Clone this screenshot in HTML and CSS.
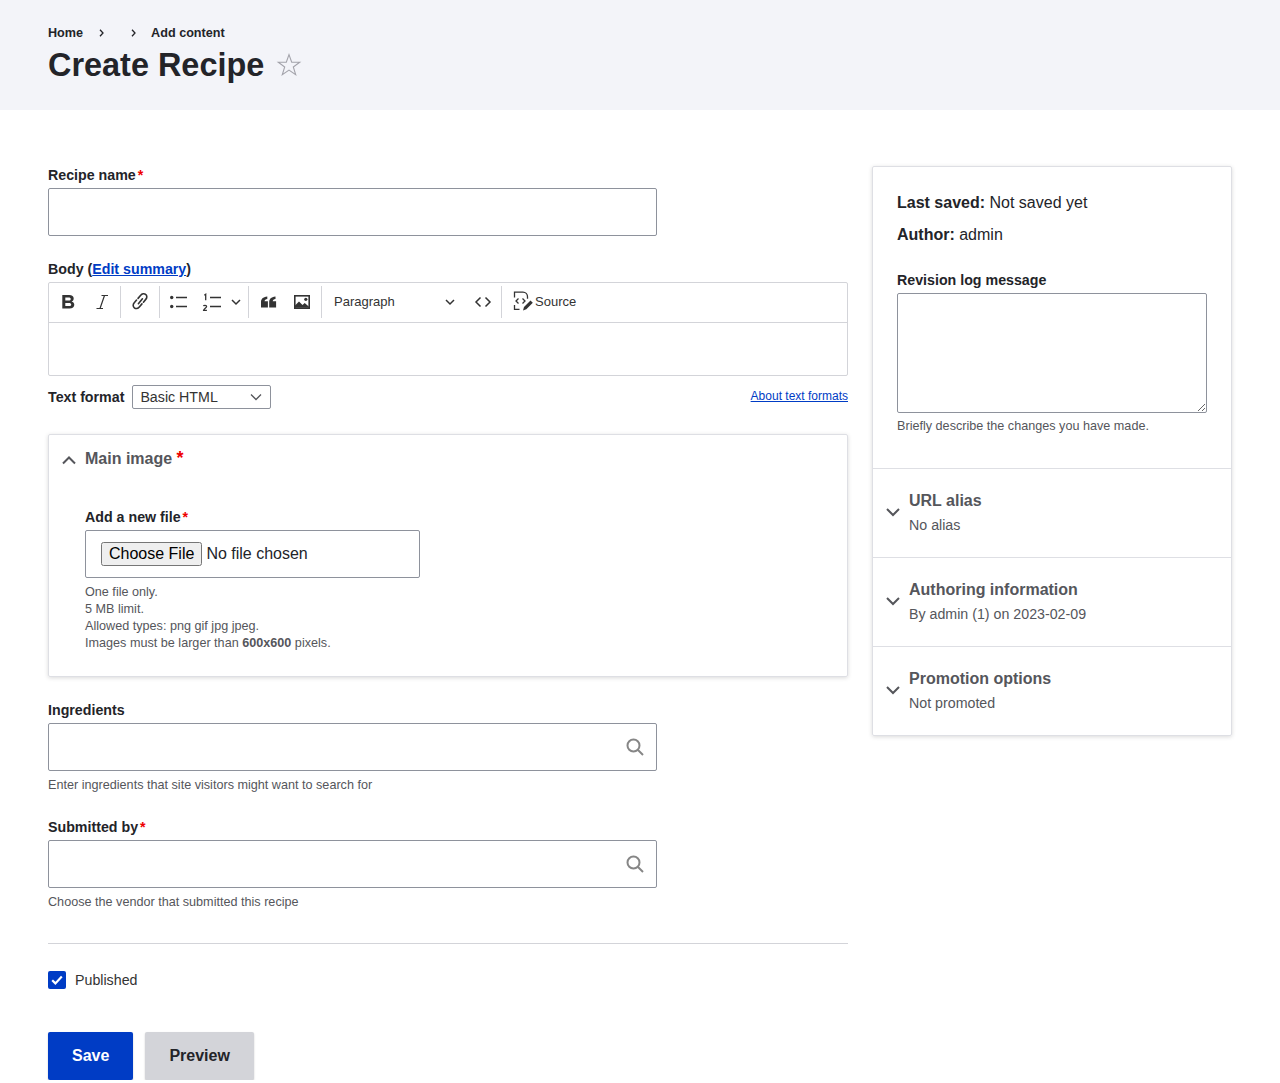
FILE: index.html
```html
<!DOCTYPE html>
<html lang="en">
<head>
  <meta charset="UTF-8">
  <meta name="viewport" content="width=device-width, initial-scale=1.0">
  <title>Create Recipe</title>
  <link rel="stylesheet" href="styles.css">
</head>
<body>
  <header class="page-head">
    <nav class="crumbs">
      <a href="#">Home</a>
      <svg class="crumb-sep" width="5" height="8" viewBox="0 0 5 8"><path d="M1 .8L4 4 1 7.200" fill="none" stroke="#232429" stroke-width="1.300"/></svg>
      <svg class="crumb-sep crumb-sep-2" width="5" height="8" viewBox="0 0 5 8"><path d="M1 .8L4 4 1 7.200" fill="none" stroke="#232429" stroke-width="1.300"/></svg>
      <a href="#">Add content</a>
    </nav>
    <div class="title-row">
      <h1>Create Recipe</h1>
      <svg class="star" width="26" height="26" viewBox="0 0 26 26"><path d="M13 2.600l2.700 7.600h8l-6.400 4.800 2.400 7.700-6.700-4.600-6.700 4.600 2.400-7.700-6.400-4.800h8z" fill="none" stroke="#a3a3ab" stroke-width="1.100"/></svg>
    </div>
  </header>

  <form class="layout">
    <div class="main-col">
      <div class="field recipe-name">
        <label class="lbl">Recipe name<span class="req">*</span></label>
        <input class="text-input" type="text">
      </div>

      <div class="field body-field">
        <label class="lbl">Body (<a href="#">Edit summary</a>)</label>
        <div class="editor">
          <div class="toolbar">
            <span class="tb-btn">
              <svg width="20" height="20" viewBox="0 0 20 20"><path fill-rule="evenodd" d="M4.300 3h6.900c2.900 0 4.500 1.300 4.500 3.500 0 1.500-.8 2.500-2.100 3 1.800.4 2.700 1.700 2.700 3.300 0 2.400-1.800 3.700-4.800 3.700H4.300zm3 2.400v3.100h3.400c1.300 0 2-.5 2-1.600 0-1-.7-1.500-2-1.500zm0 5.500v3.200h3.700c1.500 0 2.200-.5 2.200-1.600s-.7-1.600-2.200-1.600z" fill="#333"/></svg>
            </span>
            <span class="tb-btn">
              <svg width="20" height="20" viewBox="0 0 20 20"><path d="M9.500 3.500H16M4.500 16.500H11M12.500 3.500L8 16.500" fill="none" stroke="#333" stroke-width="1.200"/></svg>
            </span>
            <i class="tb-sep"></i>
            <span class="tb-btn tb-link">
              <svg width="20" height="20" viewBox="0 0 20 20"><g transform="translate(10 9) scale(1.150) translate(-10 -10)"><path d="M8.600 12.300l3.500-4.200M7 9.200l-2 2.400c-1.300 1.500-1.200 3.300.1 4.300 1.300 1.100 3.100.8 4.300-.7l2.300-2.700M13 11l2-2.400c1.300-1.500 1.200-3.300-.1-4.300-1.300-1.100-3.100-.8-4.300.7L8.300 7.700" fill="none" stroke="#333" stroke-width="1.400" stroke-linecap="round"/></g></svg>
            </span>
            <i class="tb-sep"></i>
            <span class="tb-btn">
              <svg width="20" height="20" viewBox="0 0 20 20"><circle cx="2.700" cy="5.500" r="1.700" fill="#333"/><circle cx="2.700" cy="14.500" r="1.700" fill="#333"/><path d="M7 5.500h11M7 14.500h11" stroke="#333" stroke-width="1.500"/></svg>
            </span>
            <span class="tb-btn tb-list">
              <svg width="20" height="20" viewBox="0 0 20 20"><path d="M8 5.500h11M8 14.500h11" stroke="#333" stroke-width="1.500"/><path d="M2.300 3.200l1.400-1v6" fill="none" stroke="#333" stroke-width="1.300"/><path d="M1.500 14.200c.2-1.100 3.100-1.300 3.100.3 0 1.200-2.900 2.300-3 3.800h3.300" fill="none" stroke="#333" stroke-width="1.300"/></svg>
            </span>
            <span class="tb-chev">
              <svg width="10" height="10" viewBox="0 0 10 10"><path d="M1 3l4 4 4-4" fill="none" stroke="#333" stroke-width="1.500"/></svg>
            </span>
            <i class="tb-sep"></i>
            <span class="tb-btn">
              <svg width="20" height="20" viewBox="0 0 20 20"><path d="M3 15.500V10.200C3 7.200 4.800 4.900 9.300 4.500v2.400c-1.700.3-2.700 1.100-2.800 2.400h3.400v6.200zM11.200 15.500V10.200c0-3 1.800-5.300 6.300-5.700v2.400c-1.700.3-2.700 1.100-2.800 2.400h3.400v6.200z" fill="#333"/></svg>
            </span>
            <span class="tb-btn tb-image">
              <svg width="20" height="20" viewBox="0 0 20 20"><rect x="2.800" y="3.800" width="14.400" height="12.400" fill="none" stroke="#333" stroke-width="1.600"/><path d="M3 15.800v-2.300l4-4 3.500 3.500 2.200-2 4.300 3.800v1z" fill="#333"/><circle cx="13.800" cy="7.300" r="1.600" fill="#333"/></svg>
            </span>
            <i class="tb-sep"></i>
            <span class="tb-select">
              <span class="tb-text">Paragraph</span>
              <svg width="10" height="10" viewBox="0 0 10 10"><path d="M1 3l4 4 4-4" fill="none" stroke="#333" stroke-width="1.500"/></svg>
            </span>
            <span class="tb-btn tb-code">
              <svg width="20" height="20" viewBox="0 0 20 20"><path d="M7.500 5.500L3 10l4.500 4.500M12.500 5.500L17 10l-4.500 4.500" fill="none" stroke="#333" stroke-width="1.500"/></svg>
            </span>
            <i class="tb-sep"></i>
            <span class="tb-source">
              <svg class="src-icon" width="20" height="20" viewBox="0 0 20 20"><path d="M1.500 6.500V1.200H10c2.500 0 4.500 2 4.500 4.500v2M1.500 14v4.300h5" fill="none" stroke="#333" stroke-width="1.300"/><path d="M5.500 7.500L3 10l2.500 2.500M9.500 7.500L12 10l-2.500 2.500" fill="none" stroke="#333" stroke-width="1.300"/><path d="M10 19.500l1-3.500 6.500-6.500 2.300 2.300-6.500 6.500z" fill="#333"/></svg>
              <span class="tb-text">Source</span>
            </span>
          </div>
          <div class="editor-area"></div>
        </div>
        <div class="format-row">
          <label class="lbl format-lbl">Text format</label>
          <span class="format-select">
            Basic HTML
            <svg width="12" height="12" viewBox="0 0 12 12"><path d="M1 3.500l5 5 5-5" fill="none" stroke="#55565b" stroke-width="1.300"/></svg>
          </span>
          <a class="format-help" href="#">About text formats</a>
        </div>
      </div>

      <section class="image-box">
        <div class="box-head">
          <svg width="16" height="16" viewBox="0 0 16 16"><path d="M2 11.500l6-6 6 6" fill="none" stroke="#55565b" stroke-width="2"/></svg>
          <span class="box-title">Main image <span class="req-big">*</span></span>
        </div>
        <div class="box-body">
          <label class="lbl">Add a new file<span class="req">*</span></label>
          <div class="file-wrap"><input type="file"></div>
          <div class="hint file-hint">
            One file only.<br>
            5 MB limit.<br>
            Allowed types: png gif jpg jpeg.<br>
            Images must be larger than <b>600x600</b> pixels.
          </div>
        </div>
      </section>

      <div class="field ingredients">
        <label class="lbl">Ingredients</label>
        <div class="search-input">
          <input class="text-input" type="text">
          <svg class="search-icon" width="18" height="18" viewBox="0 0 18 18"><circle cx="7.500" cy="7.500" r="6" fill="none" stroke="#868686" stroke-width="2"/><path d="M12 12l5 5" stroke="#868686" stroke-width="2"/></svg>
        </div>
        <div class="hint field-hint">Enter ingredients that site visitors might want to search for</div>
      </div>

      <div class="field submitted">
        <label class="lbl">Submitted by<span class="req">*</span></label>
        <div class="search-input">
          <input class="text-input" type="text">
          <svg class="search-icon" width="18" height="18" viewBox="0 0 18 18"><circle cx="7.500" cy="7.500" r="6" fill="none" stroke="#868686" stroke-width="2"/><path d="M12 12l5 5" stroke="#868686" stroke-width="2"/></svg>
        </div>
        <div class="hint field-hint">Choose the vendor that submitted this recipe</div>
      </div>

      <hr class="divider">

      <label class="check-row">
        <span class="checkbox">
          <svg width="14" height="14" viewBox="0 0 14 14"><path d="M2.200 7.200l3.200 3.200 6.400-6.800" fill="none" stroke="#fff" stroke-width="2.200"/></svg>
        </span>
        Published
      </label>

      <div class="actions">
        <button class="btn btn-primary" type="button">Save</button>
        <button class="btn btn-grey" type="button">Preview</button>
      </div>
    </div>

    <aside class="side-col">
      <div class="meta">
        <p class="meta-line"><b>Last saved:</b> Not saved yet</p>
        <p class="meta-line"><b>Author:</b> admin</p>
        <label class="lbl rev-lbl">Revision log message</label>
        <textarea class="rev-text"></textarea>
        <div class="hint">Briefly describe the changes you have made.</div>
      </div>
      <div class="acc-item">
        <svg width="16" height="16" viewBox="0 0 16 16"><path d="M2 5l6 6 6-6" fill="none" stroke="#55565b" stroke-width="2"/></svg>
        <div>
          <div class="acc-title">URL alias</div>
          <div class="acc-sub">No alias</div>
        </div>
      </div>
      <div class="acc-item">
        <svg width="16" height="16" viewBox="0 0 16 16"><path d="M2 5l6 6 6-6" fill="none" stroke="#55565b" stroke-width="2"/></svg>
        <div>
          <div class="acc-title">Authoring information</div>
          <div class="acc-sub">By admin (1) on 2023-02-09</div>
        </div>
      </div>
      <div class="acc-item">
        <svg width="16" height="16" viewBox="0 0 16 16"><path d="M2 5l6 6 6-6" fill="none" stroke="#55565b" stroke-width="2"/></svg>
        <div>
          <div class="acc-title">Promotion options</div>
          <div class="acc-sub">Not promoted</div>
        </div>
      </div>
    </aside>
  </form>
</body>
</html>
```

FILE: styles.css
```css
* {
  box-sizing: border-box;
}

body {
  margin: 0;
  font-family: "Liberation Sans", Arial, sans-serif;
  font-size: 16px;
  color: #232429;
  background-color: #fff;
}

a {
  color: #003cc5;
}

/* header */
.page-head {
  height: 110px;
  padding: 24px 48px 0;
  background-color: #f3f4f9;
}

.crumbs {
  display: flex;
  align-items: center;
  height: 17px;
  font-size: 12.64px;
  font-weight: bold;
}

.crumbs a {
  color: #232429;
  text-decoration: none;
}

.crumb-sep {
  margin-left: 16px;
}

.crumb-sep-2 {
  margin-left: 27px;
  margin-right: 15px;
}

.title-row {
  display: flex;
  align-items: center;
  margin-top: 4px;
}

h1 {
  margin: 0;
  font-size: 32.44px;
  line-height: 40px;
}

.star {
  margin-left: 12px;
}

/* columns */
.layout {
  display: grid;
  grid-template-columns: 800px 360px;
  gap: 24px;
  padding: 56px 48px 0;
  align-items: start;
}

.lbl {
  display: block;
  margin-bottom: 4px;
  font-size: 14.22px;
  line-height: 18px;
  font-weight: bold;
}

.req {
  margin-left: 2px;
  color: #e00;
}

.text-input {
  display: block;
  width: 609px;
  height: 48px;
  border: 1px solid #8e929c;
  border-radius: 2px;
  background: #fff;
}

.hint {
  margin-top: 5px;
  font-size: 12.64px;
  line-height: 17px;
  color: #55565b;
}

.field-hint {
  margin-top: 6px;
}

.body-field {
  margin-top: 24px;
}

/* editor */
.editor {
  border: 1px solid #d3d4d9;
  border-radius: 2px;
}

.toolbar {
  display: flex;
  align-items: center;
  height: 40px;
  padding: 0 0 1px 2px;
  border-bottom: 1px solid #d3d4d9;
}

.tb-btn {
  display: flex;
  justify-content: center;
  align-items: center;
  width: 34px;
  height: 30px;
}

.tb-link,
.tb-image {
  margin-right: 1px;
}

.tb-list {
  width: 32px;
}

.tb-chev {
  display: flex;
  align-items: center;
  width: 16px;
  margin-left: 3px;
}

.tb-sep {
  width: 1px;
  height: 32px;
  background-color: #d3d4d9;
  margin: 0 2px 0 1px;
}

.tb-text {
  margin-top: -2px;
}

.tb-select {
  display: flex;
  align-items: center;
  justify-content: space-between;
  width: 131px;
  padding-left: 10px;
  font-size: 13px;
  color: #333;
}

.tb-code {
  margin-left: 10px;
  width: 35px;
}

.tb-source {
  display: flex;
  align-items: center;
  gap: 2px;
  margin-left: 9px;
  font-size: 13px;
  color: #333;
}

.src-icon {
  margin-bottom: 2px;
}

.editor-area {
  height: 52px;
}

.format-row {
  display: flex;
  align-items: center;
  margin-top: 9px;
  height: 24px;
}

.format-lbl {
  margin: 0 8px 0 0;
}

.format-select {
  display: flex;
  align-items: center;
  justify-content: space-between;
  width: 139px;
  height: 24px;
  padding: 0 8px 0 7px;
  font-size: 14.22px;
  color: #333;
  border: 1px solid #8e929c;
  border-radius: 2px;
}

.format-help {
  margin: 0 0 2px auto;
  font-size: 12px;
}

/* main image */
.image-box {
  margin-top: 25px;
  height: 243px;
  border: 1px solid #dedfe4;
  border-radius: 2px;
  box-shadow: 0 1px 4px rgba(0, 0, 0, 0.15);
}

.box-head {
  display: flex;
  align-items: center;
  gap: 8px;
  padding: 12px 0 0 12px;
  height: 35px;
}

.box-head svg {
  margin-top: 3px;
}

.box-title {
  font-size: 16px;
  font-weight: bold;
  color: #55565b;
}

.req-big {
  color: #e00;
  font-size: 18px;
}

.box-body {
  padding: 38px 0 0 36px;
}

.file-wrap {
  display: flex;
  align-items: center;
  width: 335px;
  height: 48px;
  padding-left: 15px;
  border: 1px solid #8e929c;
  border-radius: 2px;
}

.file-wrap input {
  font: inherit;
}

.file-hint {
  margin-top: 6px;
}

/* search fields */
.search-input {
  position: relative;
  width: 609px;
}

.search-icon {
  position: absolute;
  top: 15px;
  right: 13px;
}

.ingredients {
  margin-top: 24px;
}

.submitted {
  margin-top: 24px;
}

.divider {
  margin: 32px 0 0;
  border: 0;
  border-top: 1px solid #d3d4d9;
}

.check-row {
  display: flex;
  align-items: center;
  gap: 9px;
  margin-top: 27px;
  font-size: 14.22px;
  color: #333;
}

.checkbox {
  display: flex;
  justify-content: center;
  align-items: center;
  width: 18px;
  height: 18px;
  background-color: #003cc5;
  border-radius: 2px;
}

.actions {
  display: flex;
  gap: 12px;
  margin-top: 43px;
}

.btn {
  height: 48px;
  padding: 0 24px;
  border: 0;
  border-radius: 2px;
  font: bold 16px "Liberation Sans", Arial, sans-serif;
  box-shadow: 0 1px 2px rgba(0, 0, 0, 0.2);
}

.btn-primary {
  color: #fff;
  background-color: #003cc5;
}

.btn-grey {
  color: #232429;
  background-color: #d3d4d9;
}

/* sidebar */
.side-col {
  border: 1px solid #dedfe4;
  border-radius: 2px;
  box-shadow: 0 1px 4px rgba(0, 0, 0, 0.15);
}

.meta {
  height: 301px;
  padding: 26px 24px 0;
}

.meta-line {
  margin: 0 0 12px;
  line-height: 20px;
}

.rev-lbl {
  margin-top: 26px;
  margin-bottom: 4px;
}

.rev-text {
  display: block;
  width: 310px;
  height: 120px;
  border: 1px solid #8e929c;
  border-radius: 2px;
}

.acc-item {
  display: flex;
  gap: 8px;
  height: 89px;
  padding: 22px 0 0 12px;
  border-top: 1px solid #dedfe4;
}

.acc-item svg {
  margin-top: 13px;
  flex: none;
}

.acc-title {
  font-weight: bold;
  line-height: 20px;
  color: #55565b;
}

.acc-sub {
  margin-top: 5px;
  font-size: 14.22px;
  line-height: 18px;
  color: #55565b;
}
```
